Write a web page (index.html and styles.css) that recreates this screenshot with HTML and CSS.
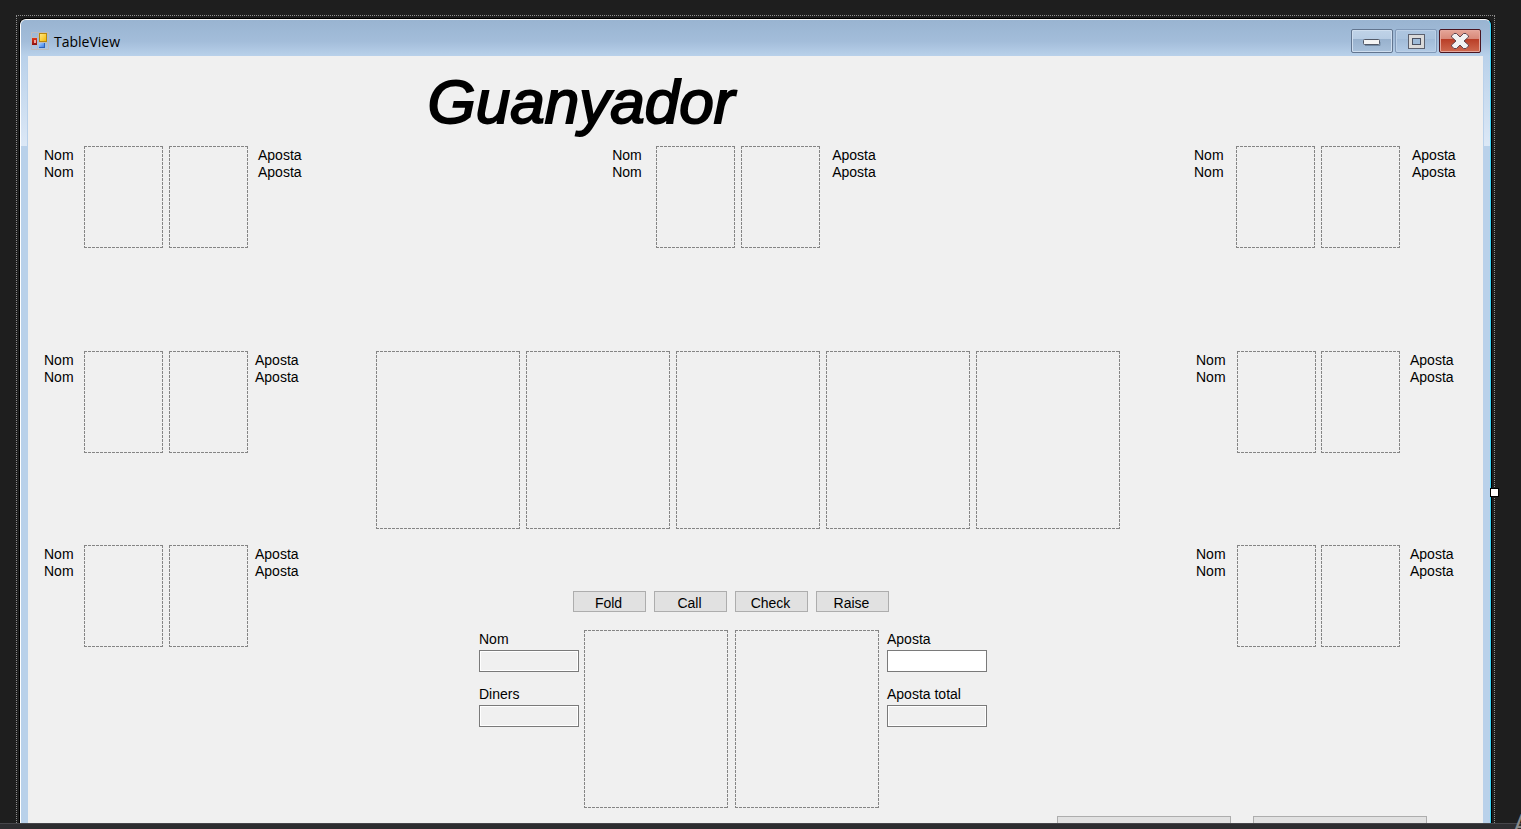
FILE: index.html
```html
<!DOCTYPE html>
<html lang="ca">
<head>
<meta charset="utf-8">
<title>TableView</title>
<link rel="stylesheet" href="styles.css">
</head>
<body>
<div class="surface">
  <div class="selection">
    <main class="window">
      <header class="titlebar">
        <svg class="app-icon" width="18" height="18" viewBox="0 0 18 18" aria-hidden="true">
          <defs>
            <linearGradient id="gold" x1="0" y1="0" x2="1" y2="1"><stop offset="0" stop-color="#ffe98a"/><stop offset="1" stop-color="#f5b800"/></linearGradient>
            <linearGradient id="red" x1="0" y1="0" x2="0" y2="1"><stop offset="0" stop-color="#e0391a"/><stop offset="1" stop-color="#8c0f0f"/></linearGradient>
            <linearGradient id="blue" x1="0" y1="0" x2="1" y2="1"><stop offset="0" stop-color="#a5d0ff"/><stop offset="1" stop-color="#2c6fe0"/></linearGradient>
          </defs>
          <path d="M.5.5h7v5h-7zM.5 12.5h6v5h-6zM.5 5.500v7M6.500 12.500v5h11v-7h-10M7.500.5h10v10" fill="none" stroke="#bcbcbe"/>
          <rect x="8.500" y="1.500" width="7" height="8" fill="url(#gold)" stroke="#b8860b"/>
          <rect x="1" y="6" width="5" height="7" fill="url(#red)"/>
          <rect x="3" y="8" width="2" height="3" fill="#f0a39a"/>
          <rect x="8" y="11" width="6" height="5" fill="url(#blue)"/>
          <path d="M8 15.500h6M13.500 11v5" stroke="#2a62bd"/>
        </svg>
        <h1 class="caption">TableView</h1>
        <div class="controls">
          <button class="control" type="button" aria-label="Minimize">
            <svg width="18" height="12" viewBox="0 0 18 12"><path d="M2 10.500h15V7" fill="none" stroke="#7189a3"/><rect x=".5" y="4.500" width="16" height="5" rx="1" fill="#f4f4f4" stroke="#525866"/></svg>
          </button>
          <button class="control control-muted" type="button" aria-label="Maximize">
            <svg width="17" height="15" viewBox="0 0 17 15"><rect x=".5" y=".5" width="16" height="14" fill="#dadada" stroke="#5b606e"/><rect x="4.500" y="4.500" width="8" height="6" fill="#9dbad8" stroke="#4a5060"/></svg>
          </button>
          <button class="control control-close" type="button" aria-label="Close">
            <svg width="18" height="16" viewBox="0 0 18 16"><path d="M3 .5h2.500L9 4 12.500.5H15L17.500 3v1L13 8l4.500 4v1L15 15.500h-2.500L9 12l-3.500 3.500H3L.5 13v-1L5 8 .5 4V3z" fill="#f2f2f2" stroke="#5f4650"/></svg>
          </button>
        </div>
      </header>

      <div class="client">
        <div class="table">
          <section class="side">
            <div class="seat seat-corner-left">
              <div class="lines"><span>Nom</span><span>Nom</span></div><div class="card"></div><div class="card"></div><div class="lines bets"><span>Aposta</span><span>Aposta</span></div>
            </div>
            <div class="seat seat-left">
              <div class="lines"><span>Nom</span><span>Nom</span></div><div class="card"></div><div class="card"></div><div class="lines bets"><span>Aposta</span><span>Aposta</span></div>
            </div>
            <div class="seat seat-left">
              <div class="lines"><span>Nom</span><span>Nom</span></div><div class="card"></div><div class="card"></div><div class="lines bets"><span>Aposta</span><span>Aposta</span></div>
            </div>
          </section>

          <section class="centre">
            <h2 class="winner">Guanyador</h2>
            <div class="seat seat-top">
              <div class="lines"><span>Nom</span><span>Nom</span></div><div class="card"></div><div class="card"></div><div class="lines bets"><span>Aposta</span><span>Aposta</span></div>
            </div>
            <div class="board">
              <div class="card card-large"></div><div class="card card-large"></div><div class="card card-large"></div><div class="card card-large"></div><div class="card card-large"></div>
            </div>
            <div class="actions">
              <button class="button" type="button">Fold</button>
              <button class="button" type="button">Call</button>
              <button class="button" type="button">Check</button>
              <button class="button" type="button">Raise</button>
            </div>
            <div class="player">
              <div class="fields">
                <div class="field"><label for="nom">Nom</label><input id="nom" type="text" readonly></div>
                <div class="field"><label for="diners">Diners</label><input id="diners" type="text" readonly></div>
              </div>
              <div class="card card-large"></div>
              <div class="card card-large"></div>
              <div class="fields">
                <div class="field"><label for="aposta">Aposta</label><input id="aposta" type="text"></div>
                <div class="field"><label for="total">Aposta total</label><input id="total" type="text" readonly></div>
              </div>
            </div>
          </section>

          <section class="side side-right">
            <div class="seat seat-corner-right">
              <div class="lines"><span>Nom</span><span>Nom</span></div><div class="card"></div><div class="card"></div><div class="lines bets"><span>Aposta</span><span>Aposta</span></div>
            </div>
            <div class="seat seat-right">
              <div class="lines"><span>Nom</span><span>Nom</span></div><div class="card"></div><div class="card"></div><div class="lines bets"><span>Aposta</span><span>Aposta</span></div>
            </div>
            <div class="seat seat-right">
              <div class="lines"><span>Nom</span><span>Nom</span></div><div class="card"></div><div class="card"></div><div class="lines bets"><span>Aposta</span><span>Aposta</span></div>
            </div>
          </section>
        </div>
        <footer class="footer">
          <button class="button button-wide" type="button"></button>
          <button class="button button-wide" type="button"></button>
        </footer>
      </div>
    </main>
    <span class="handle"></span>
  </div>
</div>
<div class="splitter"></div>
<div class="watermark">A</div>
</body>
</html>
```
FILE: styles.css
```css
* { box-sizing: border-box; }

body {
  margin: 0;
  height: 100vh;
  display: flex;
  flex-direction: column;
  overflow: hidden;
  background: #1e1e1e;
  color: #000;
  font: 14px/17px "Liberation Sans", Arial, sans-serif;
}

/* Designer surface */
.surface {
  flex: 1;
  min-height: 0;
  overflow: hidden;
  padding: 15px 26px 0 16px;
}
.selection {
  position: relative;
  padding: 3px 3px 0;
  border: 1px dotted #8c8c8c;
}
.handle {
  position: absolute;
  top: 472px;
  right: -5px;
  width: 9px;
  height: 9px;
  background: #fff;
  border: 1px solid #000;
}
.splitter {
  flex: none;
  height: 6px;
  background: #2d2d30;
  border-top: 1px solid #46464a;
}
.watermark {
  position: absolute;
  right: 0;
  bottom: 0;
  width: 8px;
  height: 24px;
  overflow: hidden;
  color: #8a8a8a;
  font: 400 28px/36px "Open Sans", sans-serif;
}

/* Window frame */
.window {
  border: 1px solid #fff;
  border-right-color: #3cd3f5;
  border-bottom: 0;
  border-radius: 6px 6px 0 0;
  box-shadow: 0 0 0 1px #000;
  background:
    linear-gradient(#b9d1ea, #dce8f6) left 0 top 36px / 6px 90px no-repeat,
    linear-gradient(#b9d1ea, #dce8f6) right 0 top 36px / 6px 90px no-repeat,
    #b9d1ea;
}
.titlebar {
  height: 36px;
  padding: 9px 9px 3px 10px;
  display: flex;
  align-items: center;
  gap: 5px;
  border-radius: 5px 5px 0 0;
  background: linear-gradient(#99b4d1, #a3bdda 60%, #b9d1ea);
}
.caption {
  margin: 0;
  flex: 1;
  padding-top: 1px;
  font: 400 14px/21px "Open Sans", "Noto Sans", sans-serif;
}
.controls { display: flex; gap: 2px; }
.control {
  width: 42px;
  height: 24px;
  padding: 0;
  display: flex;
  align-items: center;
  justify-content: center;
  border: 1px solid #62758f;
  border-radius: 2px;
  box-shadow: inset 0 0 0 1px #cfdeef;
  background: linear-gradient(#c0d3e8, #b7cce3 42%, #98b1cd 42%, #a8c0da);
}
.control-muted {
  border-color: #8199b8;
  box-shadow: inset 0 0 0 1px #bcd0e7;
  background: linear-gradient(#aec6e0, #a9c2dd 42%, #a1bbd8 42%, #b2cae5);
}
.control-close {
  border-color: #4a1520;
  box-shadow: inset 0 0 0 1px #e5a79c;
  background: linear-gradient(#e6a698, #d78777 42%, #b93e27 42%, #cf6a50);
}

/* Form */
.client {
  margin: 0 7px;
  background: #f0f0f0;
}
.table {
  display: flex;
  padding: 0 27px 8px 16px;
}
.side {
  flex: none;
  width: 258px;
  padding-top: 90px;
}
.side-right { width: 262px; }
.centre {
  flex: 1;
  min-width: 0;
  display: flex;
  flex-direction: column;
  align-items: center;
}
.winner {
  margin: 0 334px 0 0;
  padding-top: 10px;
  height: 90px;
  font-size: 62px;
  line-height: 72px;
  font-weight: 400;
  font-style: italic;
  -webkit-text-stroke: 2px #000;
}

.seat {
  display: flex;
  --names: 40px;
  --gap: 6px;
  --bets: 7px;
}
.seat + .seat { margin-top: 103px; }
.seat + .seat + .seat { margin-top: 92px; }
.seat-corner-left { --bets: 10px; }
.seat-corner-right { --names: 42px; --bets: 12px; }
.seat-right { --names: 41px; --gap: 5px; --bets: 10px; padding-left: 2px; }
.seat-top { --names: 44px; --bets: 12px; margin-right: 8px; }
.lines {
  display: flex;
  flex-direction: column;
  width: var(--names);
  padding-top: 1px;
}
.lines.bets {
  width: auto;
  padding-left: var(--bets);
}

.card {
  --across: repeating-linear-gradient(90deg, #858585 0 3px, transparent 3px 4px);
  --down: repeating-linear-gradient(#858585 0 3px, transparent 3px 4px);
  flex: none;
  width: 79px;
  height: 102px;
  background:
    var(--across) top / 100% 1px no-repeat,
    var(--across) bottom / 100% 1px no-repeat,
    var(--down) left / 1px 100% no-repeat,
    var(--down) right / 1px 100% no-repeat;
}
.seat .card + .card { margin-left: var(--gap); }
.card-large { width: 144px; height: 178px; }

.board {
  display: flex;
  gap: 6px;
  margin-top: 103px;
}
.actions {
  display: flex;
  gap: 8px;
  margin: 62px 34px 0 0;
}
.button {
  width: 73px;
  height: 21px;
  padding: 4px 2px 0 0;
  border: 1px solid #adadad;
  background: #e1e1e1;
  color: #000;
  font: inherit;
  line-height: 15px;
}
.player {
  display: grid;
  grid-template-columns: 105px 151px 152px 100px;
  margin: 18px 30px 0 0;
}
.fields {
  display: flex;
  flex-direction: column;
  gap: 13px;
  width: 100px;
}
.field { display: flex; flex-direction: column; }
.field label { height: 20px; padding-top: 1px; }
.field input {
  width: 100%;
  height: 22px;
  padding: 1px 3px;
  border: 1px solid #7a7a7a;
  background: #fff;
  font: inherit;
}
.field input:read-only {
  background: #f0f0f0;
  box-shadow: inset 0 0 0 1px #fff;
}

.footer {
  display: flex;
  justify-content: flex-end;
  gap: 22px;
  padding: 0 56px 24px 0;
}
.button-wide { width: 174px; height: 24px; }
```
